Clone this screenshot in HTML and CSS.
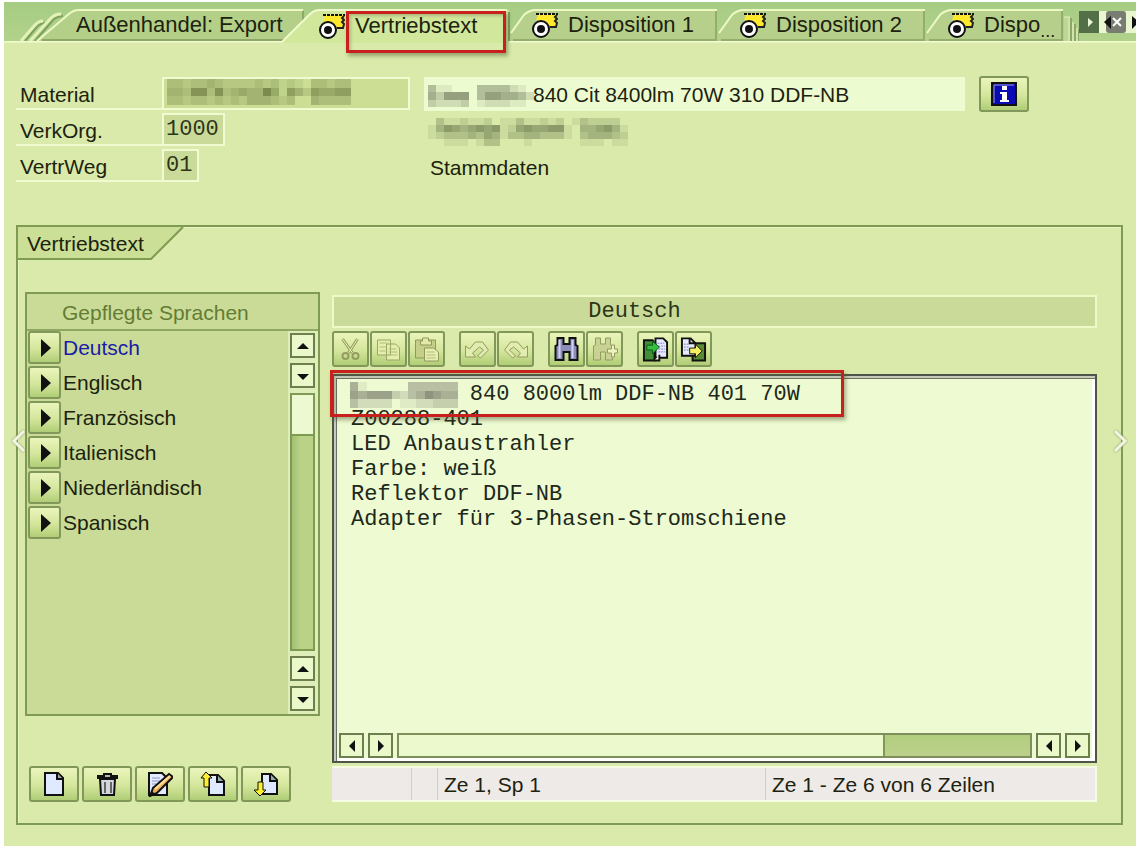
FILE: index.html
```html
<!DOCTYPE html>
<html lang="de">
<head>
<meta charset="utf-8">
<title>Vertriebstext</title>
<link rel="stylesheet" href="styles.css">
</head>
<body>
<svg class="defs" aria-hidden="true">
  <defs>
    <symbol id="view" viewBox="0 0 26 26">
      <path d="M4 1h22v2l-2 2 2 2-2 2 2 2-2 3h-6l-4-6H6l-2-2 2-2z" fill="#ffe92e"/>
      <path d="M4 1h22M6 5h15" stroke="#111" stroke-width="2" stroke-dasharray="3 1"/>
      <path d="M6 5h14l2 8" fill="none" stroke="#ffe92e" stroke-width="3"/>
      <path d="M25 2l-2 2 2 2-2 2 2 2-1 4h-6" fill="none" stroke="#222" stroke-width="2"/>
      <circle cx="9" cy="16" r="8" fill="#fff" stroke="#111" stroke-width="2"/>
      <circle cx="9" cy="16" r="4" fill="#111"/>
    </symbol>
    <symbol id="page" viewBox="0 0 26 26">
      <path d="M4 2h13l5 5v17H4z" fill="#dfe9ff" stroke="#111" stroke-width="2"/>
      <path d="M16 2v6h6" fill="#9aa" stroke="#111" stroke-width="2"/>
    </symbol>
    <symbol id="tabshape" viewBox="0 0 209 32" preserveAspectRatio="none">
      <path d="M0 32V24L14 6Q18 2 24 1H208V32z" fill="#b6d08c"/>
      <path d="M1 24L14 6Q18 2 24 1H208" fill="none" stroke="#edf9c4" stroke-width="2"/>
      <path d="M207 2V31H3" fill="none" stroke="#93ad6c" stroke-width="2"/>
    </symbol>
  </defs>
</svg>

<main class="window">
  <div class="tabs" role="tablist">
    <svg class="lead" viewBox="0 0 52 32" aria-hidden="true">
      <path d="M13 32L24 19Q28 14 33 14M23 32L42 10Q46 7 51 7" fill="none" stroke="#7f9f60" stroke-width="2"/>
      <path d="M9 32L22 17Q26 12 31 12M18 32L39 9Q43 5 49 5" fill="none" stroke="#e3f2b8" stroke-width="3"/>
    </svg>
    <button class="tab tab-first" role="tab">
      <svg class="shape" viewBox="0 0 268 32" preserveAspectRatio="none" aria-hidden="true">
        <path d="M0 32L34 4Q38 1 42 1H267V32z" fill="#b4cf88"/>
        <path d="M1 32L34 4Q38 1 42 1H267" fill="none" stroke="#edf9c4" stroke-width="2"/>
        <path d="M267 2V31H6" fill="none" stroke="#8ca766" stroke-width="2"/>
      </svg>
      <span>Außenhandel: Export</span>
    </button>
    <button class="tab tab-active" role="tab" aria-selected="true">
      <svg class="shape" viewBox="0 0 228 34" preserveAspectRatio="none" aria-hidden="true">
        <path d="M0 34L28 5Q32 1 38 1H227V34z" fill="#d0e79c"/>
        <path d="M0 33L28 5Q32 1 38 1H225" fill="none" stroke="#f0fbcc" stroke-width="2"/>
        <path d="M227 3V32" stroke="#7f9f60" stroke-width="2"/>
      </svg>
      <svg class="eye" aria-hidden="true"><use href="#view"/></svg>
      <span>Vertriebstext</span>
      <i class="mark mark-tab"></i>
    </button>
    <button class="tab tab-wide" role="tab">
      <svg class="shape" aria-hidden="true"><use href="#tabshape"/></svg>
      <svg class="eye" aria-hidden="true"><use href="#view"/></svg>
      <span>Disposition 1</span>
    </button>
    <button class="tab tab-wide" role="tab">
      <svg class="shape" aria-hidden="true"><use href="#tabshape"/></svg>
      <svg class="eye" aria-hidden="true"><use href="#view"/></svg>
      <span>Disposition 2</span>
    </button>
    <button class="tab tab-cut" role="tab">
      <svg class="shape" viewBox="0 0 138 32" preserveAspectRatio="none" aria-hidden="true">
        <path d="M0 32V24L14 6Q18 2 24 1H137V32z" fill="#b6d08c"/>
        <path d="M1 24L14 6Q18 2 24 1H137" fill="none" stroke="#edf9c4" stroke-width="2"/>
        <path d="M136 2V31H3" fill="none" stroke="#93ad6c" stroke-width="2"/>
      </svg>
      <svg class="eye" aria-hidden="true"><use href="#view"/></svg>
      <span>Dispo</span><small>...</small>
    </button>
    <svg class="stack" viewBox="0 0 15 32" aria-hidden="true">
      <path d="M0 8h6v24H0zM6 14h4v18H6zM10 20h4v12h-4z" fill="#bdd595"/>
      <path d="M7 9v23M11 15v17M15 20v12" stroke="#8da76a" stroke-width="2"/>
      <path d="M0 8h6M5 9v23M8 14h2M9 15v17M12 20h2M13 21v11" fill="none" stroke="#e6f4bd" stroke-width="1"/>
    </svg>
    <div class="tabnav">
      <button class="play" aria-label="Abspielen"><svg viewBox="0 0 20 22"><path d="M9 7l5 4-5 5z" fill="#e9f5d8"/></svg></button>
      <button class="prev" aria-label="Zurück"><svg viewBox="0 0 28 22"><rect x="7" y="0" width="20" height="22" rx="3" fill="#444" fill-opacity=".68"/><path d="M12 5v13L5 11z" fill="#111"/><path d="M14 7l8 8M22 7l-8 8" stroke="#fff" stroke-width="2"/></svg></button>
      <button class="next" aria-label="Weiter"><svg viewBox="0 0 12 22"><path d="M5 5v13l7-7z" fill="#111"/></svg></button>
    </div>
  </div>

  <section class="body">
    <div class="head">
      <label class="lbl" for="mat">Material</label>
      <div class="cell"><input class="field field-mat" id="mat" readonly><svg class="mosaic mosaic-mat" aria-hidden="true" data-color="#66743c" data-rows="33233432222323121033233|44377373454485164265566|33233232324443230043333"></svg></div>
      <div class="desc">
        <input class="field-desc" aria-label="Bezeichnung" readonly value="840 Cit 8400lm 70W 310 DDF-NB">
        <svg class="mosaic mosaic-desc" aria-hidden="true" data-color="#5b6448" data-rows="4110004444210|5366604665542|3222301222110"></svg>
        <button class="btn" aria-label="Information"><svg viewBox="0 0 26 26"><rect x="1" y="2" width="24" height="22" fill="#0b0bb4" stroke="#111" stroke-width="2"/><path d="M3 22V4h20" fill="none" stroke="#9aa0e8" stroke-width="1"/><path d="M11 5h5v4h-5zM9 11h7v8h2v2H9v-2h2v-6H9z" fill="#fff"/></svg></button>
      </div>

      <label class="lbl" for="org">VerkOrg.</label>
      <div class="cell"><input class="field field-org" id="org" readonly value="1000"></div>
      <div class="info"><svg class="mosaic-org" aria-hidden="true" data-color="#56643c" data-rows="03112112011311212013222200|14654565612565566104456410|12333435413344333103444320|00111013300010000001110110"></svg></div>

      <label class="lbl" for="weg">VertrWeg</label>
      <div class="cell"><input class="field field-weg" id="weg" readonly value="01"></div>
      <div class="info">Stammdaten</div>
    </div>

    <section class="panel">
      <h2 class="legend">
        <svg class="shape" viewBox="0 0 168 34" preserveAspectRatio="none" aria-hidden="true"><path d="M0 0H165L133 32H0z" fill="#cbdf96"/><path d="M165 0L133 32H0" fill="none" stroke="#7f9a52" stroke-width="2"/></svg>
        <span>Vertriebstext</span>
      </h2>
      <div class="cols">
        <div class="side">
          <div class="langs">
            <h3>Gepflegte Sprachen</h3>
            <div class="langbody">
              <ul>
                <li class="current"><button aria-label="Deutsch"><svg viewBox="0 0 10 18"><path d="M0 0l10 9-10 9z"/></svg></button><span>Deutsch</span></li>
                <li><button aria-label="Englisch"><svg viewBox="0 0 10 18"><path d="M0 0l10 9-10 9z"/></svg></button><span>Englisch</span></li>
                <li><button aria-label="Französisch"><svg viewBox="0 0 10 18"><path d="M0 0l10 9-10 9z"/></svg></button><span>Französisch</span></li>
                <li><button aria-label="Italienisch"><svg viewBox="0 0 10 18"><path d="M0 0l10 9-10 9z"/></svg></button><span>Italienisch</span></li>
                <li><button aria-label="Niederländisch"><svg viewBox="0 0 10 18"><path d="M0 0l10 9-10 9z"/></svg></button><span>Niederländisch</span></li>
                <li><button aria-label="Spanisch"><svg viewBox="0 0 10 18"><path d="M0 0l10 9-10 9z"/></svg></button><span>Spanisch</span></li>
              </ul>
              <div class="vscroll">
                <button class="arrow" aria-label="Nach oben"><svg viewBox="0 0 12 12"><path d="M0 9l6-6 6 6z"/></svg></button>
                <button class="arrow" aria-label="Nach unten"><svg viewBox="0 0 12 12"><path d="M0 4l6 6 6-6z"/></svg></button>
                <div class="vtrack"><div class="vthumb"></div></div>
                <button class="arrow" aria-label="Nach oben"><svg viewBox="0 0 12 12"><path d="M0 9l6-6 6 6z"/></svg></button>
                <button class="arrow" aria-label="Nach unten"><svg viewBox="0 0 12 12"><path d="M0 4l6 6 6-6z"/></svg></button>
              </div>
            </div>
          </div>
          <div class="actions">
            <button class="btn" aria-label="Neu"><svg viewBox="0 0 26 26"><use href="#page"/></svg></button>
            <button class="btn" aria-label="Löschen"><svg viewBox="0 0 26 26"><path d="M6 8h15l-1 16H7z" fill="#d3d6da" stroke="#111" stroke-width="2"/><path d="M4 7V5h6V3h7v2h6v2z" fill="#b4b8b8" stroke="#111" stroke-width="2"/><path d="M11 11v11M17 11v11" stroke="#666" stroke-width="2"/></svg></button>
            <button class="btn" aria-label="Ändern"><svg viewBox="0 0 26 26"><path d="M2 2h13l5 5v17H2z" fill="#e3ebff" stroke="#111" stroke-width="2"/><path d="M5 7h8M5 10h9M5 13h7M5 16h4" stroke="#8d93c8" stroke-width="1"/><path d="M3 25l3-8L22 3l4 3L10 22z" fill="#f0ae52" stroke="#111" stroke-width="2"/><path d="M8 18L23 5" stroke="#ffe0a0" stroke-width="2"/><path d="M3 25l2-5 3 3z" fill="#111"/></svg></button>
            <button class="btn" aria-label="Hochladen"><svg viewBox="0 0 26 26"><path d="M9 4h9l6 6v14H9z" fill="#dfe9ff" stroke="#111" stroke-width="2"/><path d="M17 4v7h7" fill="#9aa" stroke="#111" stroke-width="2"/><path d="M6 1l6 6H9v9H4V7H1z" fill="#ffee30" stroke="#111" stroke-width="1"/></svg></button>
            <button class="btn" aria-label="Herunterladen"><svg viewBox="0 0 26 26"><path d="M9 3h9l6 6v14H9z" fill="#dfe9ff" stroke="#111" stroke-width="2"/><path d="M17 3v7h7" fill="#9aa" stroke="#111" stroke-width="2"/><path d="M5 11h5v8h3l-6 6-6-6h4z" fill="#ffee30" stroke="#111" stroke-width="1"/></svg></button>
          </div>
        </div>

        <div class="editor">
          <h3 class="title">Deutsch</h3>
          <div class="toolbar">
            <div class="group">
              <button class="tool" disabled aria-label="Ausschneiden"><svg viewBox="0 0 26 26"><path d="M5 3l10 14M20 3L11 17" fill="none" stroke="#939d60" stroke-width="3"/><path d="M5 3l10 14M20 3L11 17" fill="none" stroke="#eef3b0" stroke-width="1"/><circle cx="8" cy="20" r="3" fill="none" stroke="#939d60" stroke-width="2"/><circle cx="18" cy="20" r="3" fill="none" stroke="#939d60" stroke-width="2"/></svg></button>
              <button class="tool" disabled aria-label="Kopieren"><svg viewBox="0 0 26 26"><path d="M2 4h13v15H2zM11 8h9l4 4v12H11z" fill="#e4efae" stroke="#9aa567" stroke-width="1"/><path d="M4 7h8M4 11h6M4 15h6M13 13h8M13 16h9M13 19h9" stroke="#b2bd7a"/></svg></button>
              <button class="tool" disabled aria-label="Einfügen"><svg viewBox="0 0 26 26"><path d="M2 4h20v18H2z" fill="#c6cf88" stroke="#8f995c" stroke-width="1"/><path d="M7 5h2V2h6v3h3v4H7z" fill="#e4e8aa" stroke="#8f995c"/><path d="M11 12h9l5 4v9H11z" fill="#e6eeb0" stroke="#8f995c"/><path d="M13 16h8M13 19h9M13 22h9" stroke="#b2bd7a"/></svg></button>
            </div>
            <div class="group">
              <button class="tool" disabled aria-label="Rückgängig"><svg viewBox="0 0 26 26"><path d="M1 10v11h10l-3-4 7-6 4 3-6 6 3 2 8-8-6-8h-7L5 13z" fill="#e3ecb0" stroke="#929c60"/></svg></button>
              <button class="tool" disabled aria-label="Wiederholen"><svg viewBox="0 0 26 26"><path d="M25 10v11H15l3-4-7-6-4 3 6 6-3 2-8-8 6-8h7l6 7z" fill="#e3ecb0" stroke="#929c60"/></svg></button>
            </div>
            <div class="group">
              <button class="tool" aria-label="Suchen"><svg viewBox="0 0 26 26"><path d="M4 2h6v6h6V2h6v7l2 1v14h-8v-8h-6v8H2V10l2-1z" fill="#8c8eb8" stroke="#111" stroke-width="2"/><path d="M6 4v18M19 4v18" stroke="#cfd2f4" stroke-width="2"/></svg></button>
              <button class="tool" disabled aria-label="Weitersuchen"><svg viewBox="0 0 26 26"><path d="M4 2h5v6h5V2h5v7l2 1v14h-7v-8h-5v8H2V10l2-1z" fill="#c9d294" stroke="#929c60"/><path d="M16 13h4V9h3v4h3v4h-3v4h-3v-4h-4z" fill="#edf3bd" stroke="#929c60"/></svg></button>
            </div>
            <div class="group">
              <button class="tool" aria-label="Laden"><svg viewBox="0 0 28 26"><path d="M14 2h8l4 4v16H14z" fill="#e6eaff" stroke="#111" stroke-width="2"/><path d="M2 4h9l2 3v18H2z" fill="#3f8f35" stroke="#111" stroke-width="2"/><path d="M13 25h5v-6" fill="#fff" stroke="#111" stroke-width="2"/><path d="M16 7h7M17 10h7M17 13h7M17 16h7" stroke="#7a7fb0" stroke-dasharray="2 1"/><path d="M5 9h6V5l7 6-7 7v-4H5z" fill="#35c040" stroke="#0d5a1c" stroke-width="1"/></svg></button>
              <button class="tool" aria-label="Speichern"><svg viewBox="0 0 28 26"><path d="M13 7h13v18H13z" fill="#5a8a33" stroke="#111" stroke-width="2"/><path d="M2 2h9l5 5v13H2z" fill="#e6eaff" stroke="#111" stroke-width="2"/><path d="M10 2v5h6" fill="none" stroke="#111" stroke-width="2"/><path d="M4 8h5M4 11h6M4 14h6" stroke="#7a7fb0" stroke-dasharray="2 1"/><path d="M10 12h6V8l7 7-7 7v-4h-6z" fill="#f4f060" stroke="#111" stroke-width="1"/></svg></button>
            </div>
          </div>
          <div class="textbox">
            <textarea aria-label="Vertriebstext Deutsch" spellcheck="false" wrap="off">         840 8000lm DDF-NB 401 70W
Z00288-401
LED Anbaustrahler
Farbe: weiß
Reflektor DDF-NB
Adapter für 3-Phasen-Stromschiene</textarea>
            <svg class="mosaic mosaic-line" aria-hidden="true" data-color="#66665a" data-rows="5100000444444|6566632457655|4222201122333"></svg>
            <div class="hscroll">
              <button class="arrow" aria-label="Nach links"><svg viewBox="0 0 12 12"><path d="M9 0v12L3 6z"/></svg></button>
              <button class="arrow" aria-label="Nach rechts"><svg viewBox="0 0 12 12"><path d="M3 0v12l6-6z"/></svg></button>
              <div class="htrack"><div class="hthumb"></div></div>
              <button class="arrow" aria-label="Nach links"><svg viewBox="0 0 12 12"><path d="M9 0v12L3 6z"/></svg></button>
              <button class="arrow" aria-label="Nach rechts"><svg viewBox="0 0 12 12"><path d="M3 0v12l6-6z"/></svg></button>
            </div>
            <i class="mark mark-line"></i>
          </div>
          <div class="status"><span></span><span></span><span>Ze 1, Sp 1</span><span>Ze 1 - Ze 6 von 6 Zeilen</span></div>
        </div>
      </div>
    </section>
  </section>
  <button class="slide slide-prev" aria-label="Vorheriges Bild"><svg viewBox="0 0 18 26"><path d="M14 3L4 13l10 10"/></svg></button>
  <button class="slide slide-next" aria-label="Nächstes Bild"><svg viewBox="0 0 18 26"><path d="M4 3l10 10L4 23"/></svg></button>
</main>
<script src="mosaic.js"></script>
</body>
</html>
```
FILE: styles.css
```css
* { box-sizing: border-box; }

body {
  margin: 0;
  padding: 2px 4px 4px;
  background: #fff;
  color: #1c220e;
  font: 21px/24px "Liberation Sans", Arial, sans-serif;
}

button {
  margin: 0;
  padding: 0;
  border: 0;
  background: none;
  color: inherit;
  font: inherit;
}

h2, h3 { margin: 0; font-size: 21px; font-weight: normal; }
svg { display: block; }
.defs { position: absolute; width: 0; height: 0; }

.window {
  position: relative;
  background: #d9eaaa;
}

/* Tab strip */
.tabs {
  position: relative;
  z-index: 1;
  display: flex;
  align-items: flex-end;
  height: 41px;
  padding-top: 7px;
  overflow-x: clip;
  background: linear-gradient(#a6cc84 0, #b2d28a 39px, #f2fbcf 39px);
  border-bottom: 1px solid #e6f4bd;
}
.lead { flex: none; width: 52px; height: 32px; margin: 0 -22px 1px 8px; }
.tab {
  position: relative;
  flex: none;
  display: flex;
  align-items: center;
  gap: 10px;
  height: 32px;
  margin-bottom: 1px;
  padding-left: 22px;
  font-size: 22px;
  white-space: nowrap;
}
.shape { position: absolute; inset: 0; width: 100%; height: 100%; }
.tab > span, .tab > small, .eye { position: relative; }
.tab-first { width: 268px; margin-left: -6px; padding-left: 40px; }
.tab-active { z-index: 1; width: 228px; height: 34px; margin: 0 0 -1px -22px; padding-left: 37px; }
.tab-wide { width: 208px; }
.tab-cut { width: 138px; }
.tab-cut small { align-self: flex-end; margin-left: -10px; font-size: 18px; line-height: 20px; }
.eye { flex: none; width: 26px; height: 26px; margin-top: 2px; }
.stack { flex: none; width: 15px; height: 32px; margin-bottom: 1px; }
.tabnav { display: flex; flex: 1; align-self: flex-start; margin-top: 2px; overflow: hidden; background: #e9f6cf; }
.tabnav svg { height: 22px; }
.play svg { width: 20px; background: #536f48; }
.prev svg { width: 28px; }
.next svg { width: 12px; }

.mark {
  position: absolute;
  border: 3px solid #c8201c;
  box-shadow: 2px 3px 4px rgba(70, 80, 40, .45), inset 2px 2px 3px rgba(90, 90, 50, .3);
  pointer-events: none;
}
.mark-tab { left: 64px; top: 2px; width: 160px; height: 42px; }
.mark-line { left: -4px; right: 251px; top: -6px; height: 47px; }

/* Header form */
.body { padding: 34px 13px 21px 12px; }
.head {
  display: grid;
  grid-template-columns: 146px 248px 1fr;
  grid-auto-rows: 33px;
  row-gap: 3px;
}
.lbl { display: flex; align-items: center; padding: 5px 0 0 4px; border-bottom: 2px solid #f1fad0; }
.cell { position: relative; }
.field {
  display: block;
  height: 33px;
  padding: 0 0 0 2px;
  border: 2px solid #f1fad0;
  border-radius: 0;
  background: #cadb99;
  color: #2c3518;
  font: 22px/24px "Liberation Mono", monospace;
}
.field-mat { width: 248px; background: #cbde94; }
.field-org { width: 63px; }
.field-weg { width: 37px; }
.desc { position: relative; display: flex; align-items: center; gap: 14px; padding-left: 14px; }
.field-desc {
  flex: 0 1 541px;
  min-width: 0;
  height: 34px;
  padding: 2px 0 0 109px;
  border: 0;
  background: #edfbd0;
  color: #1c220e;
  font: 21px/24px "Liberation Sans", Arial, sans-serif;
}
.info { display: flex; align-items: center; padding: 4px 0 0 20px; }
.mosaic { position: absolute; }
.mosaic-mat { left: 5px; top: 2px; width: 184px; height: 26px; }
.mosaic-desc { left: 18px; top: 8px; width: 106px; height: 22px; }
.mosaic-org { width: 208px; height: 28px; margin-left: -2px; }
.mosaic-line { left: 16px; top: 6px; width: 108px; height: 26px; }

.btn, .tool, .langs li button {
  display: flex;
  align-items: center;
  justify-content: center;
  flex: none;
  border: 2px solid #82975a;
  border-radius: 3px;
  background: linear-gradient(#eaf5bb, #d4e69c 55%, #b0cd76);
}
.btn { width: 50px; height: 36px; }
.btn svg { width: 26px; height: 26px; }

/* Text panel */
.panel { margin-top: 43px; border: 2px solid #7f9a52; padding-bottom: 21px; box-shadow: inset 1px 1px #e8f5c2; }
.legend { position: relative; width: 168px; height: 34px; padding: 5px 0 0 9px; }
.legend span { position: relative; }
.cols { display: flex; gap: 12px; padding: 31px 24px 0 7px; }
.side { flex: none; width: 295px; display: flex; flex-direction: column; justify-content: space-between; }
.langs { border: 2px solid #7f9a52; background: #c9db96; }
.langs h3 { height: 37px; padding: 7px 0 0 35px; border-bottom: 2px solid #8fa861; color: #647c34; }
.langbody { display: flex; justify-content: space-between; }
.langs ul { display: flex; flex-direction: column; gap: 2px; margin: 0; padding: 0 1px; list-style: none; }
.langs li { display: flex; align-items: center; gap: 2px; }
.langs li span { padding-top: 1px; }
.langs li button { width: 33px; height: 33px; padding-left: 2px; }
.langs li button svg { width: 10px; height: 18px; fill: #111; }
.current { color: #1b1ba8; }
.vscroll { display: flex; flex-direction: column; gap: 5px; width: 30px; height: 383px; padding: 2px 3px 3px 2px; background: #dfedb8; }
.arrow {
  display: flex;
  align-items: center;
  justify-content: center;
  flex: none;
  width: 25px;
  height: 25px;
  border: 2px solid #6d7f4c;
  background: #ebf8ca;
}
.arrow svg { width: 12px; height: 12px; fill: #111; }
.vtrack { flex: 1; width: 25px; border: 2px solid #7f9a52; background: linear-gradient(90deg, #a2bf72, #b9d286 40%); }
.vthumb { height: 41px; border-bottom: 2px solid #7f9a52; background: #edf9d0; }
.actions { display: flex; gap: 3px; padding-left: 4px; }

.editor { flex: 1; min-width: 0; padding-top: 3px; }
.title {
  height: 33px;
  padding-right: 160px;
  border: 2px solid #eff9c8;
  background: #cadb99;
  color: #2c3518;
  font: 22px/30px "Liberation Mono", monospace;
  text-align: center;
}
.toolbar { display: flex; gap: 14px; margin-top: 3px; }
.group { display: flex; gap: 1px; }
.tool { width: 37px; height: 36px; }
.tool svg { width: 27px; height: 26px; }
.textbox {
  position: relative;
  margin-top: 7px;
  padding: 3px 3px 2px 4px;
  border: 2px solid #50554a;
  background: #eefbd2;
  box-shadow: inset 2px 2px #c5cbb8, inset 3px 3px #6a7064, inset -3px -3px #fff;
}
textarea {
  display: block;
  width: 100%;
  height: 353px;
  padding: 3px 13px;
  border: 0;
  outline: 0;
  resize: none;
  overflow: hidden;
  background: transparent;
  color: #20281a;
  font: 22px/25px "Liberation Mono", monospace;
}
.hscroll { display: flex; gap: 4px; padding: 1px 2px 1px 1px; }
.htrack { flex: 1; height: 25px; border: 2px solid #7f8f5c; background: linear-gradient(#b2ce7e, #bcd08c); }
.hthumb { width: 77%; height: 100%; border-right: 2px solid #7f9a52; background: #ebf9cc; }
.status {
  display: grid;
  grid-template-columns: 79px 26px 328px 1fr;
  height: 36px;
  margin-top: 3px;
  border: solid #f6fbe4;
  border-width: 2px 2px 2px 0;
  background: #eeeae8;
}
.status span { padding: 5px 0 0 6px; border-left: 1px solid #d2cfcb; white-space: nowrap; }
.status span:first-child { border-left: 0; }

/* Gallery arrows */
.slide { position: absolute; top: 426px; }
.slide svg { width: 18px; height: 26px; fill: none; stroke: #f1f5e2; stroke-width: 3px; filter: drop-shadow(0 0 1px #8b946f); }
.slide-prev { left: 6px; }
.slide-next { right: 7px; }
```
FILE: mosaic.js
```js
// Fills each masked area with a grid of squares; every digit is one square's strength.
document.querySelectorAll('svg[data-rows]').forEach(function (svg) {
  var rows = svg.dataset.rows.split('|');
  svg.setAttribute('viewBox', '0 0 ' + rows[0].length + ' ' + rows.length);
  svg.setAttribute('preserveAspectRatio', 'none');
  svg.setAttribute('shape-rendering', 'crispEdges');
  rows.forEach(function (row, y) {
    row.split('').forEach(function (digit, x) {
      var r = document.createElementNS('http://www.w3.org/2000/svg', 'rect');
      r.setAttribute('x', x);
      r.setAttribute('y', y);
      r.setAttribute('width', 1);
      r.setAttribute('height', 1);
      r.setAttribute('fill', svg.dataset.color);
      r.setAttribute('fill-opacity', digit / 10);
      svg.appendChild(r);
    });
  });
});
```
